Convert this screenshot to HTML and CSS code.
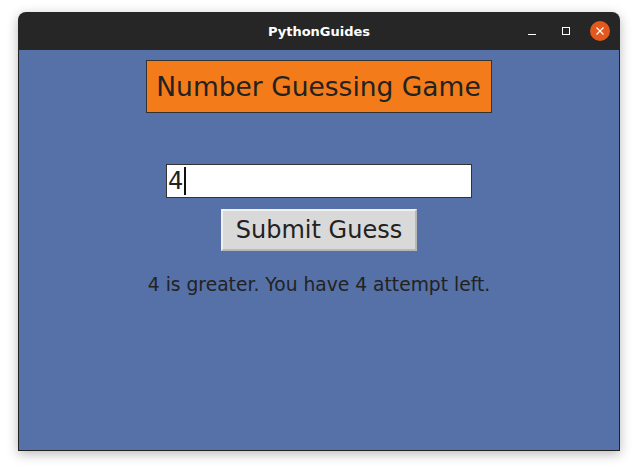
FILE: index.html
```html
<!DOCTYPE html>
<html>
<head>
<meta charset="utf-8">
<link rel="stylesheet" href="styles.css">
</head>
<body>
<div class="window">
  <div class="titlebar">
    <span class="title">PythonGuides</span>
    <div class="controls">
      <span class="ctl min"><svg width="10" height="10" viewBox="0 0 10 10"><path d="M1 8.5H9" stroke="#fff" stroke-width="1"/></svg></span>
      <span class="ctl max"><svg width="10" height="10" viewBox="0 0 10 10"><rect x="1.5" y="1.5" width="7" height="7" fill="none" stroke="#fff" stroke-width="1"/></svg></span>
      <span class="ctl close"><svg width="10" height="10" viewBox="0 0 10 10"><path d="M1.5 1.5L8.5 8.5M8.5 1.5L1.5 8.5" stroke="#fff" stroke-width="1.2"/></svg></span>
    </div>
  </div>
  <div class="content">
    <div class="heading">Number Guessing Game</div>
    <div class="entry"><span>4</span><span class="caret"></span></div>
    <div class="button">Submit Guess</div>
    <div class="message">4 is greater. You have 4 attempt left.</div>
  </div>
</div>
</body>
</html>
```
FILE: styles.css
```css
html, body {
  margin: 0;
  padding: 0;
  background: #ffffff;
}
body {
  width: 638px;
  height: 470px;
  overflow: hidden;
}
.window {
  margin: 12px 0 0 18px;
  width: 602px;
  height: 439px;
  display: flex;
  flex-direction: column;
  border-radius: 8px 8px 0 0;
  box-shadow: 0 3px 12px rgba(0,0,0,0.28);
  overflow: hidden;
}
.titlebar {
  height: 38px;
  flex: 0 0 38px;
  background: #262626;
  display: flex;
  align-items: center;
  justify-content: center;
  position: relative;
}
.title {
  color: #ffffff;
  font-family: "DejaVu Sans", sans-serif;
  font-weight: bold;
  font-size: 13px;
}
.controls {
  position: absolute;
  right: 10px;
  top: 0;
  height: 38px;
  display: flex;
  align-items: center;
  gap: 14px;
}
.ctl {
  width: 20px;
  height: 20px;
  display: flex;
  align-items: center;
  justify-content: center;
}
.close {
  background: #e2591b;
  border-radius: 50%;
}
.content {
  flex: 1;
  background: #5571a7;
  border: 1px solid #222;
  border-top: none;
  display: flex;
  flex-direction: column;
  align-items: center;
  font-family: "DejaVu Sans", sans-serif;
  color: #222;
}
.heading {
  margin-top: 10px;
  background: #f47b1a;
  border: 1px solid #333;
  height: 51px;
  width: 344px;
  margin-left: -1px;
  display: flex;
  align-items: center;
  justify-content: center;
  font-size: 26.5px;
}
.entry {
  margin-top: 51px;
  width: 303px;
  height: 32px;
  background: #fff;
  border: 1px solid #333;
  display: flex;
  align-items: center;
  font-size: 24px;
  padding-left: 1px;
  box-sizing: content-box;
}
.caret {
  display: inline-block;
  width: 2px;
  height: 28px;
  background: #111;
  margin-left: 1px;
}
.button {
  margin-top: 11px;
  width: 192px;
  height: 38px;
  background: #d9d9d9;
  border: 2px solid #f0f0f0;
  border-right-color: #b8b8b8;
  border-bottom-color: #b8b8b8;
  display: flex;
  align-items: center;
  justify-content: center;
  font-size: 24px;
}
.message {
  margin-top: 23px;
  font-size: 18.7px;
}
```
